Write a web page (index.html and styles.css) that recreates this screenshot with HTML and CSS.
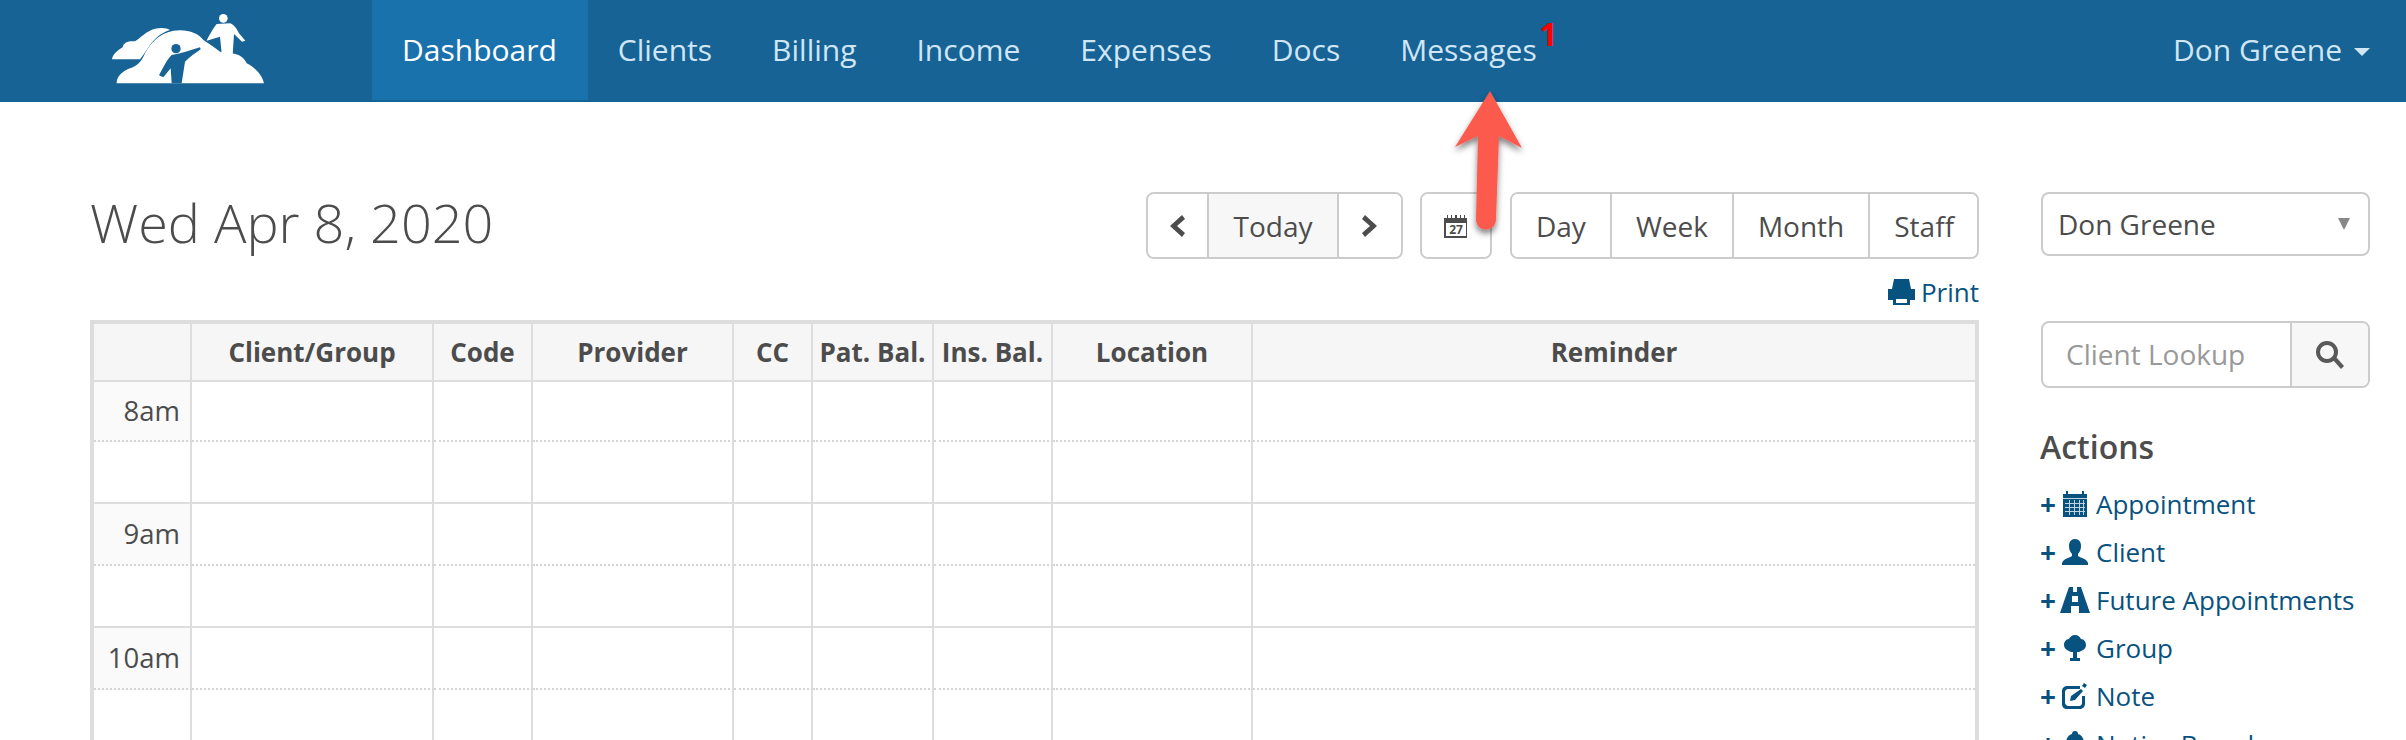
FILE: index.html
```html
<!DOCTYPE html>
<html lang="en">
<head>
<meta charset="utf-8">
<title>Dashboard</title>
<link rel="stylesheet" href="styles.css">
</head>
<body>
<svg class="defs" width="0" height="0" aria-hidden="true">
  <symbol id="i-cal" viewBox="0 0 24 26">
    <path fill-rule="evenodd" d="M0 3h3V0h2v3h14V0h2v3h3v23H0z"/>
    <path fill="#fff" d="M0 7h24v1H0zM2 12h20v1H2zm0 4h20v1H2zm0 4h20v1H2zM6 9h1v15H6zm5 0h1v15h-1zm5 0h1v15h-1zm4 0h1v15h-1z" opacity=".75"/>
  </symbol>
  <symbol id="i-user" viewBox="0 0 26 26">
    <path d="M13 0c4 0 6 3 6 7 0 3-1 6-3 8v2c3 2 9 3 10 7v2H0v-2c1-4 7-5 10-7v-2C8 13 7 10 7 7c0-4 2-7 6-7z"/>
  </symbol>
  <symbol id="i-road" viewBox="0 0 30 26">
    <path fill-rule="evenodd" d="M9 0h4v5h4V0h4l9 26H19v-7h-8v7H0zM12 9v6h6V9z"/>
  </symbol>
  <symbol id="i-tree" viewBox="0 0 22 26">
    <path d="M11 0c3 0 5 2 6 4 3 0 5 3 5 6s-2 5-5 6c-1 1-3 1-4 1v6h3v3H6v-3h3v-6c-1 0-3 0-4-1-3-1-5-3-5-6s2-6 5-6c1-2 3-4 6-4z"/>
  </symbol>
  <symbol id="i-edit" viewBox="0 0 26 26">
    <path d="M6 3h12v3H6C5 6 3 7 3 9v11c0 1 2 3 3 3h11c2 0 3-2 3-3v-7h3v8c0 3-3 5-5 5H5c-3 0-5-2-5-5V8c0-3 2-5 6-5z"/>
    <path d="M9 13 19 6l2 2-8 9-5 1zM22 0l3 2-2 3-3-2z"/>
  </symbol>
  <symbol id="i-bell" viewBox="0 0 26 26">
    <path d="M13 0c2 0 3 1 3 3 4 1 6 5 6 9 0 4 1 7 4 9v2H0v-2c3-2 4-5 4-9 0-4 2-8 6-9 0-2 1-3 3-3z"/>
  </symbol>
</svg>

<nav class="navbar">
  <a class="brand" href="#" aria-label="Home">
    <svg class="logo" viewBox="0 0 600 300" width="200" height="100">
      <path class="w" d="M66 178C68 162 85 150 98 142 100 125 120 122 135 124 150 115 170 92 195 86 215 82 232 84 240 90 215 97 195 115 180 135 170 150 160 165 150 178Z"/>
      <path class="w" d="M80 250C80 230 95 215 120 205 135 200 150 190 160 170 175 135 205 100 250 92 290 86 325 98 340 120L400 160C430 155 460 165 470 190 490 200 515 220 522 250Z"/>
      <path class="b" d="M352 125 392 157 400 100 375 90Z"/>
      <circle class="b" cx="258" cy="146" r="14"/>
      <path class="b" d="M330 142C305 150 275 160 245 165 230 180 218 205 207 226L220 232 242 205 245 250H275L285 185C300 170 318 158 332 148Z"/>
      <circle class="w" cx="400" cy="55" r="13"/>
      <path class="w" d="M380 72 420 70C430 72 440 85 447 100L466 122 456 125 432 102 428 165 395 160 390 110 350 122C355 110 370 85 380 72Z"/>
    </svg>
  </a>
  <ul class="nav-links">
    <li><a class="nav-link active" href="#">Dashboard</a></li>
    <li><a class="nav-link" href="#">Clients</a></li>
    <li><a class="nav-link" href="#">Billing</a></li>
    <li><a class="nav-link" href="#">Income</a></li>
    <li><a class="nav-link" href="#">Expenses</a></li>
    <li><a class="nav-link" href="#">Docs</a></li>
    <li class="has-badge"><a class="nav-link" href="#">Messages</a><span class="badge">1</span></li>
  </ul>
  <a class="nav-user" href="#">Don Greene <span class="caret"></span></a>
</nav>

<div class="page">
  <main class="main">
    <div class="toolbar">
      <h1 class="title">Wed Apr 8, 2020</h1>
      <div class="controls">
        <div class="btn-group">
          <button class="btn btn-prev" aria-label="Previous"><svg width="18" height="24" viewBox="0 0 18 24"><path d="M14 1 2 12l12 11 3-4-8-7 8-7z"/></svg></button>
          <button class="btn btn-today">Today</button>
          <button class="btn btn-next" aria-label="Next"><svg width="18" height="24" viewBox="0 0 18 24"><path d="M4 1 16 12 4 23l-3-4 8-7-8-7z"/></svg></button>
        </div>
        <div class="btn-group">
          <button class="btn btn-date" aria-label="Pick date">
            <svg width="24" height="24" viewBox="0 0 24 24"><path fill-rule="evenodd" d="M0 4h3V1h1v3h3V1h1v3h3V1h2v3h3V1h1v3h3V1h1v3h2v20H0zM2 9v13h20V9z"/><text x="12" y="20" class="cal-num">27</text></svg>
          </button>
        </div>
        <div class="btn-group btn-group-views">
          <button class="btn">Day</button>
          <button class="btn">Week</button>
          <button class="btn">Month</button>
          <button class="btn">Staff</button>
        </div>
      </div>
    </div>
    <div class="print-row">
      <a class="print" href="#">
        <svg width="27" height="26" viewBox="0 0 27 26"><path d="M6 0h15l2 10h4v11h-5v5H5v-5H0V10h4zm2 20v4h11v-4z" fill-rule="evenodd"/></svg>
        Print
      </a>
    </div>
    <table class="schedule">
      <colgroup>
        <col class="c-time"><col class="c-client"><col class="c-code"><col class="c-prov"><col class="c-cc"><col class="c-pat"><col class="c-ins"><col class="c-loc"><col>
      </colgroup>
      <thead>
        <tr><th></th><th>Client/Group</th><th>Code</th><th>Provider</th><th>CC</th><th>Pat. Bal.</th><th>Ins. Bal.</th><th>Location</th><th>Reminder</th></tr>
      </thead>
      <tbody>
        <tr class="half-a"><td class="time">8am</td><td></td><td></td><td></td><td></td><td></td><td></td><td></td><td></td></tr>
        <tr class="half-b"><td class="time"></td><td></td><td></td><td></td><td></td><td></td><td></td><td></td><td></td></tr>
        <tr class="half-a"><td class="time">9am</td><td></td><td></td><td></td><td></td><td></td><td></td><td></td><td></td></tr>
        <tr class="half-b"><td class="time"></td><td></td><td></td><td></td><td></td><td></td><td></td><td></td><td></td></tr>
        <tr class="half-a"><td class="time">10am</td><td></td><td></td><td></td><td></td><td></td><td></td><td></td><td></td></tr>
        <tr class="half-b"><td class="time"></td><td></td><td></td><td></td><td></td><td></td><td></td><td></td><td></td></tr>
      </tbody>
    </table>
  </main>

  <aside class="sidebar">
    <div class="select"><span>Don Greene</span><span class="select-arrow"></span></div>
    <div class="lookup">
      <span class="lookup-input">Client Lookup</span>
      <span class="lookup-btn"><svg width="30" height="30" viewBox="0 0 30 30"><circle cx="12" cy="12" r="9" fill="none" stroke="currentColor" stroke-width="4"/><path d="M18 20l3-3 8 9-3 3z" fill="currentColor"/></svg></span>
    </div>
    <h2 class="actions-title">Actions</h2>
    <ul class="actions">
      <li><a href="#"><span class="plus">+</span><span class="a-icon"><svg width="24" height="26"><use href="#i-cal"/></svg></span>Appointment</a></li>
      <li><a href="#"><span class="plus">+</span><span class="a-icon"><svg width="26" height="26"><use href="#i-user"/></svg></span>Client</a></li>
      <li><a href="#"><span class="plus">+</span><span class="a-icon"><svg width="30" height="26"><use href="#i-road"/></svg></span>Future Appointments</a></li>
      <li><a href="#"><span class="plus">+</span><span class="a-icon"><svg width="22" height="26"><use href="#i-tree"/></svg></span>Group</a></li>
      <li><a href="#"><span class="plus">+</span><span class="a-icon"><svg width="26" height="26"><use href="#i-edit"/></svg></span>Note</a></li>
      <li><a href="#"><span class="plus">+</span><span class="a-icon"><svg width="26" height="26"><use href="#i-bell"/></svg></span>Notice Board</a></li>
    </ul>
  </aside>
</div>

<svg class="arrow" width="100" height="170" viewBox="0 0 100 170" aria-hidden="true">
  <defs>
    <filter id="arrow-shadow" x="-30%" y="-20%" width="160%" height="140%">
      <feDropShadow dx="0" dy="4" stdDeviation="3" flood-color="#000" flood-opacity=".5"/>
    </filter>
  </defs>
  <path class="arrow-fill" filter="url(#arrow-shadow)" d="M50 5 82 62 59 50 56 133C56 147 36 147 36 133L38 50 15 61Z"/>
</svg>
</body>
</html>
```

FILE: styles.css
```css
* { box-sizing: border-box; }
html, body { margin: 0; height: 740px; overflow: hidden; background: #fff; }
body { font-family: "Open Sans", "Liberation Sans", sans-serif; color: #4c4c4c; font-size: 28px; position: relative; }
a { text-decoration: none; color: inherit; }
ul { list-style: none; margin: 0; padding: 0; }
.defs { position: absolute; }

.navbar { display: flex; height: 102px; background: #176396; align-items: flex-start; font-size: 30px; }
.brand { width: 372px; height: 100px; padding-left: 90px; flex: none; display: block; }
.logo { display: block; filter: blur(.6px); }
.logo .w { fill: #fff; }
.logo .b { fill: #176396; }
.nav-links { display: flex; }
.nav-links li { position: relative; }
.nav-link { display: block; height: 100px; line-height: 100px; padding: 0 30px; color: #d0e6f5; }
.nav-link.active { color: #fff; background: #1a72ad; padding-right: 31px; }
.badge { position: absolute; left: 169px; top: 15px; color: #f00; font-weight: 700; font-size: 32px; line-height: 38px; }
.nav-user { margin-left: auto; margin-right: 36px; line-height: 100px; color: #d0e6f5; display: flex; align-items: center; gap: 12px; }
.caret { width: 0; height: 0; border: 8px solid transparent; border-top-color: #d0e6f5; border-bottom: 0; margin-top: 3px; }

.page { display: flex; padding: 90px 36px 0 90px; gap: 62px; }
.main { width: 1889px; flex: none; }

.toolbar { display: flex; justify-content: space-between; align-items: flex-start; height: 67px; }
.title { margin: -3px 0 0; font-weight: 300; font-size: 54px; line-height: 66px; }
.controls { display: flex; gap: 17px; }
.btn-group { display: flex; border: 2px solid #ccc; border-radius: 8px; height: 67px; overflow: hidden; }
.btn-group-views { margin-left: 1px; }
.btn { font: inherit; color: inherit; background: #fff; border: 0; border-right: 2px solid #ccc; padding: 0 24px; height: 100%; display: flex; align-items: center; justify-content: center; }
.btn:last-child { border-right: 0; }
.btn-group-views .btn:last-child { padding-right: 23px; }
.btn svg { fill: #4c4c4c; display: block; }
.btn-prev { width: 61px; padding: 0; }
.btn-next { width: 62px; padding: 0; }
.btn-today { width: 130px; padding: 0; background: #f7f7f7; }
.btn-date { width: 68px; padding: 0; }
.cal-num { font-size: 12px; font-weight: 700; text-anchor: middle; fill: #4c4c4c; }

.print-row { display: flex; justify-content: flex-end; height: 61px; padding-top: 18px; }
.print { color: #08527f; font-size: 26px; line-height: 30px; display: flex; align-items: center; gap: 6px; height: 30px; }
.print svg { fill: #08527f; display: block; }

.schedule { width: 1889px; table-layout: fixed; border-collapse: separate; border-spacing: 0; border: 2px solid #ddd; border-left-width: 4px; border-top-width: 4px; border-right-width: 4px; }
.c-time { width: 98px; } .c-client { width: 242px; } .c-code { width: 99px; } .c-prov { width: 201px; }
.c-cc { width: 79px; } .c-pat { width: 121px; } .c-ins { width: 119px; } .c-loc { width: 200px; }
.schedule th { height: 58px; background: #f6f6f6; border-right: 2px solid #ddd; border-bottom: 2px solid #ddd; font-size: 26px; font-weight: 700; padding: 0; color: #4c4c4c; }
.schedule td { height: 62px; border-right: 2px solid #ddd; padding: 0; }
.schedule tbody tr:first-child td { height: 60px; }
.schedule th:last-child, .schedule td:last-child { border-right: 0; }
.half-a td { border-bottom: 2px dotted #d4d4d4; }
.half-b td { border-bottom: 2px solid #ddd; }
.schedule .time { background: #fafafa; text-align: right; padding: 0 10px 2px 0; font-size: 27.5px; vertical-align: middle; }
.half-b .time { background: #fff; }

.sidebar { width: 329px; flex: none; }
.select { height: 64px; border: 2px solid #ccc; border-radius: 8px; display: flex; align-items: center; justify-content: space-between; padding: 0 18px 0 15px; }
.select-arrow { width: 0; height: 0; border: 6px solid transparent; border-top: 12px solid #888; border-bottom: 0; }
.lookup { margin-top: 65px; height: 67px; display: flex; border: 2px solid #ccc; border-radius: 8px; overflow: hidden; }
.lookup-input { flex: 1; color: #999; padding-left: 23px; line-height: 63px; }
.lookup-btn { width: 78px; background: #f7f7f7; border-left: 2px solid #ccc; display: flex; align-items: center; justify-content: center; color: #595959; }
.actions-title { margin: 38px 0 0 -1px; font-size: 32px; font-weight: 600; line-height: 42px; }
.actions { margin-top: 12px; margin-left: -1px; color: #08527f; font-size: 26px; }
.actions li { height: 48px; line-height: 48px; }
.actions a { display: flex; align-items: center; }
.plus { width: 20px; font-weight: 700; font-size: 28px; }
.a-icon { width: 30px; display: flex; justify-content: center; margin-right: 6px; }
.a-icon svg { fill: #08527f; display: block; }

.arrow { position: absolute; left: 1440px; top: 86px; pointer-events: none; }
.arrow-fill { fill: #fc5a4e; }
```
